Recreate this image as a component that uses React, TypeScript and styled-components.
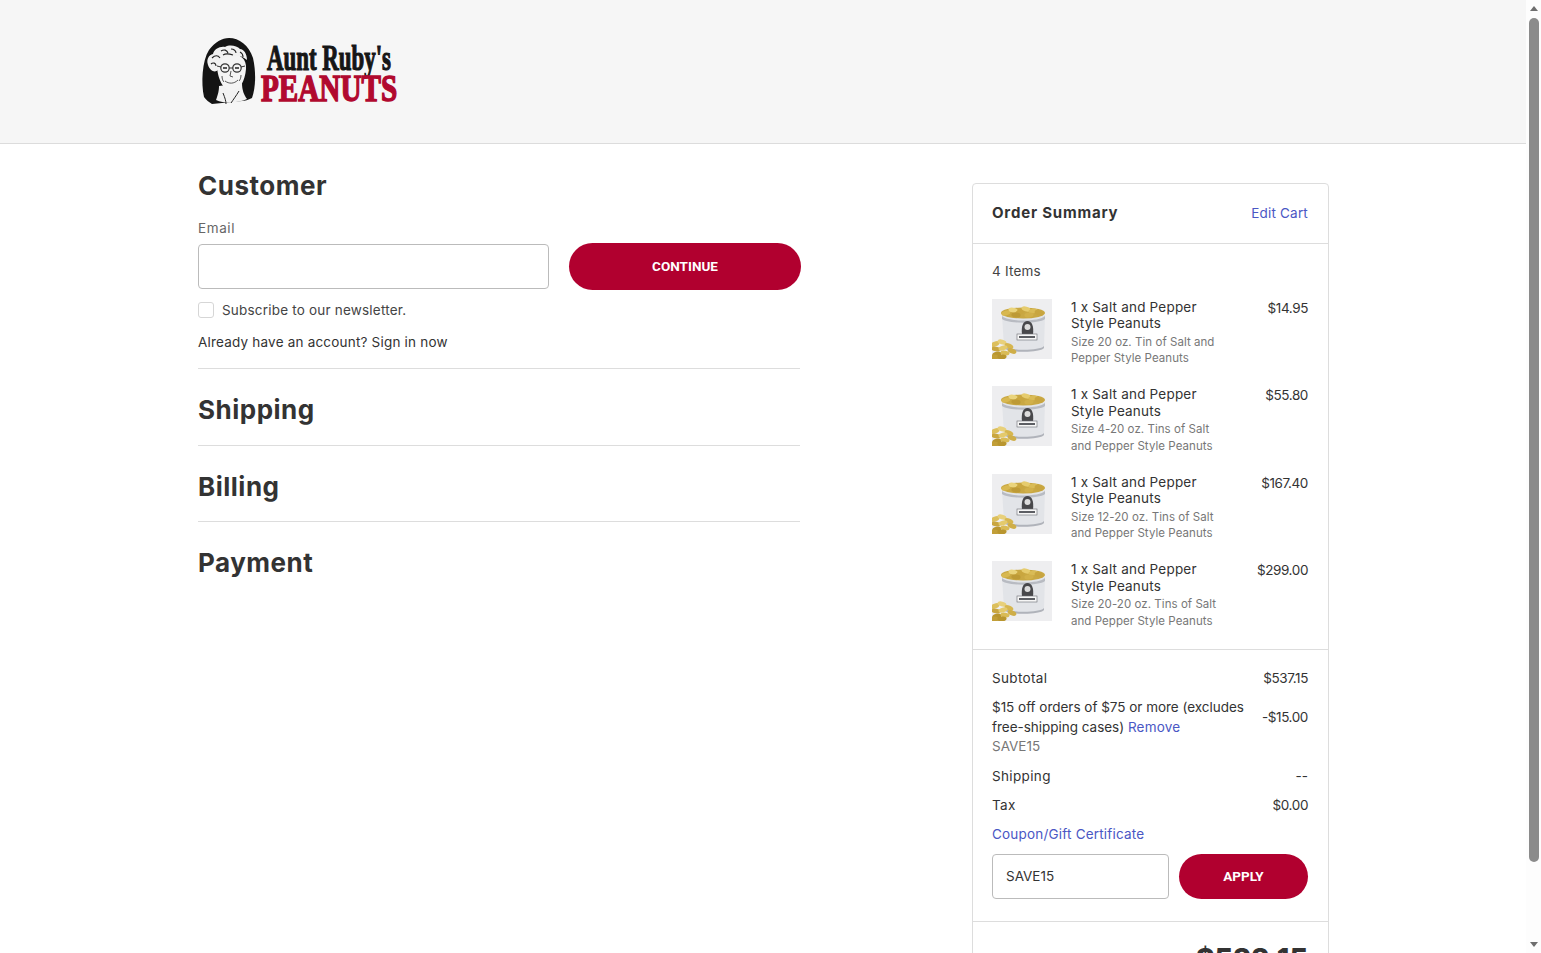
import React from 'react'
import styled, { createGlobalStyle } from 'styled-components'

const FONT = `Inter, "Noto Sans", "Liberation Sans", sans-serif`

const GlobalStyle = createGlobalStyle`
  html, body {
    margin: 0;
    height: 100%;
    overflow: hidden;
    background: #fff;
    font-family: ${FONT};
    color: #333;
  }
`

const Shell = styled.div`
  display: flex;
  width: 1541px;
  height: 953px;
  overflow: hidden;
`
const Page = styled.div`
  width: 1526px;
  height: 953px;
  overflow: hidden;
  flex: none;
`
const Scrollbar = styled.div`
  width: 15px;
  flex: none;
  display: flex;
  flex-direction: column;
  align-items: center;
  background: #fdfdfd;
`
const Arrow = styled.div<{ $down?: boolean }>`
  width: 15px;
  height: 17px;
  flex: none;
  display: flex;
  align-items: center;
  justify-content: center;
  &::after {
    content: '';
    border-left: 4.5px solid transparent;
    border-right: 4.5px solid transparent;
    ${p => (p.$down ? 'border-top: 5px solid #6e6e6e;' : 'border-bottom: 5px solid #6e6e6e;')}
  }
`
const Thumb = styled.div`
  width: 10px;
  height: 844px;
  margin-top: 1px;
  border-radius: 5px;
  background: #8b8b8b;
  flex: none;
`
const Spacer = styled.div`
  flex: 1;
`

const Header = styled.header`
  height: 143px;
  background: #f6f6f6;
  border-bottom: 1px solid #dcdcdc;
  overflow: hidden;
`
const Container = styled.div`
  width: 1131px;
  margin-left: 198px;
`
const LogoWrap = styled(Container)`
  padding-top: 37px;
  svg {
    display: block;
  }
`
const Main = styled(Container)`
  display: flex;
  justify-content: space-between;
  align-items: flex-start;
`
const Left = styled.div`
  width: 602px;
  padding-top: 26px;
`
const Heading = styled.h2`
  margin: 0;
  font-size: 26px;
  line-height: 32px;
  font-weight: 700;
  letter-spacing: 0.5px;
  color: #333;
`
const CustomerForm = styled.div`
  padding-bottom: 17px;
  border-bottom: 1px solid #ddd;
`
const EmailLabel = styled.div`
  margin-top: 17px;
  font-size: 13.5px;
  line-height: 18px;
  letter-spacing: 0.6px;
  color: #666;
`
const EmailRow = styled.div`
  display: flex;
  align-items: center;
  gap: 20px;
  margin-top: 6px;
  width: 604px;
`
const TextInput = styled.div<{ $w: number }>`
  box-sizing: border-box;
  width: ${p => p.$w}px;
  height: 45px;
  padding: 0 13px;
  display: flex;
  align-items: center;
  background: #fff;
  border: 1px solid #bbb;
  border-radius: 4px;
  font-size: 13.5px;
  color: #333;
`
const PillButton = styled.button<{ $w: number; $h: number }>`
  width: ${p => p.$w}px;
  height: ${p => p.$h}px;
  padding: 0 0 1px;
  border: none;
  border-radius: 24px;
  background: #b1002f;
  color: #fff;
  font-family: Roboto, ${FONT};
  font-size: 13.5px;
  font-weight: 700;
  text-transform: uppercase;
  flex: none;
`
const CheckRow = styled.div`
  display: flex;
  align-items: center;
  gap: 8px;
  margin-top: 11px;
  height: 17px;
  font-size: 13.5px;
  letter-spacing: 0.2px;
  color: #444;
`
const Box = styled.div`
  box-sizing: border-box;
  width: 16px;
  height: 16px;
  border: 1px solid #d6d6d6;
  border-radius: 3px;
  background: #fff;
`
const SignIn = styled.div`
  margin-top: 15px;
  font-size: 13.5px;
  line-height: 18px;
  letter-spacing: 0.2px;
  color: #333;
`
const Step = styled.div<{ $last?: boolean }>`
  padding: 25px 0 ${p => (p.$last ? 0 : 18.5)}px;
  ${p => (p.$last ? '' : 'border-bottom: 1px solid #ddd;')}
`

const Card = styled.aside`
  box-sizing: border-box;
  width: 357px;
  margin-top: 39px;
  border: 1px solid #ddd;
  border-radius: 4px;
  background: #fff;
`
const CardHead = styled.div`
  height: 60px;
  padding: 0 20px 2px 19px;
  box-sizing: border-box;
  display: flex;
  align-items: center;
  justify-content: space-between;
  border-bottom: 1px solid #ddd;
`
const CardTitle = styled.div`
  font-size: 15px;
  font-weight: 700;
  letter-spacing: 0.8px;
  color: #333;
`
const BlueLink = styled.a`
  color: #4a57c4;
  font-size: 13.5px;
  letter-spacing: 0.2px;
`
const CouponLink = styled(BlueLink)`
  display: block;
  line-height: 18px;
`
const Section = styled.div`
  padding: 0 20px 0 19px;
  border-bottom: 1px solid #ddd;
`
const ItemsSection = styled(Section)`
  padding-top: 18px;
  padding-bottom: 19.6px;
`
const ItemCount = styled.div`
  font-size: 13.5px;
  line-height: 18px;
  letter-spacing: 0.2px;
  color: #444;
  margin-bottom: 19px;
`
const ItemList = styled.div`
  display: flex;
  flex-direction: column;
  gap: 19.4px;
`
const Item = styled.div`
  display: grid;
  grid-template-columns: 60px 1fr auto;
  column-gap: 19px;
  align-items: start;
`
const TinArt = styled.svg`
  display: block;
  filter: blur(0.45px);
`
const ItemName = styled.div`
  font-size: 13.5px;
  line-height: 16.4px;
  letter-spacing: 0.2px;
  color: #333;
`
const ItemDesc = styled.div`
  margin-top: 2px;
  font-size: 11.5px;
  line-height: 16.6px;
  letter-spacing: 0.05px;
  color: #777;
`
const ItemPrice = styled.div`
  font-size: 13.5px;
  line-height: 18px;
  letter-spacing: -0.4px;
  color: #333;
`
const Totals = styled(Section)`
  padding-top: 19px;
  padding-bottom: 22px;
`
const Row = styled.div`
  display: flex;
  justify-content: space-between;
  align-items: center;
  font-size: 13.5px;
  line-height: 18px;
  color: #333;
  margin-bottom: 11px;
`
const RowLabel = styled.span`
  letter-spacing: 0.35px;
`
const Amount = styled.span`
  letter-spacing: -0.4px;
`
const DiscountText = styled.div`
  line-height: 20px;
  margin-top: -1px;
  letter-spacing: -0.02px;
`
const Code = styled.div`
  font-size: 13.5px;
  line-height: 18px;
  color: #777;
  margin: -11px 0 12px;
`
const CouponRow = styled.div`
  display: flex;
  gap: 10px;
  margin-top: 11px;
`
const GrandTotal = styled.div`
  padding: 19px 20px 0 19px;
  text-align: right;
  font-size: 28.5px;
  line-height: 36px;
  font-weight: 800;
  color: #333;
`

const Logo = () => (
  <svg width="200" height="76" viewBox="0 0 200 76" role="img" aria-label="Aunt Ruby's Peanuts">
    <path d="M6 60 C3 46 4 24 11 13 C17 5 24 1 31 1 C41 1 51 8 55 21 C58 34 58 50 54 61 C50 63 47 64 44 64 L14 67 C11 65 8 63 6 60 Z" fill="#141414" />
    <path d="M18 63 C20 57 21 54 21 49 L44 46 C44 53 46 58 49 62 C41 66 27 67 18 63 Z" fill="#f2f2f2" />
    <path d="M19 30 C18 20 24 17 33 17 C42 17 49 22 48 32 C47 44 42 53 34 54 C26 54 20 43 19 30 Z" fill="#f4f4f4" />
    <path d="M10 28 C8 22 11 18 15 17 C16 12 22 9 27 10 C32 7 39 9 42 12 C46 12 49 17 49 23 C46 21 44 19 40 19 C34 20 28 19 24 22 C22 25 21 28 20 33 C17 36 12 34 10 28 Z" fill="#f1f1f1" />
    <path d="M14 21 C17 18 20 18 22 21 M23 14 C26 12 29 13 30 16 M33 12 C36 12 38 14 38 16 M42 15 C44 16 45 18 45 20 M13 27 C15 25 18 26 18 29 M25 18 C28 16 32 17 35 18" fill="none" stroke="#222" strokeWidth="1.1" />
    <circle cx="27" cy="31" r="4.2" fill="none" stroke="#333" strokeWidth="1.2" />
    <circle cx="39" cy="31" r="4.2" fill="none" stroke="#333" strokeWidth="1.2" />
    <path d="M25 31 H29 M37 31 H41" stroke="#222" strokeWidth="1.3" />
    <path d="M31 31 H35 M23 30 L19 29 M43 30 L47 29" stroke="#333" strokeWidth="1" />
    <path d="M33 34 L32 39 L35 40 M27 44 C31 47 36 47 40 43 M24 39 C24 42 25 44 26 45 M43 38 C43 41 42 43 41 44" fill="none" stroke="#444" strokeWidth="0.9" />
    <path d="M25 56 C27 61 28 64 28 67 M41 54 C38 59 35 63 33 66" fill="none" stroke="#222" strokeWidth="1" />
    <text transform="translate(69 33) scale(0.636 1)" fontFamily="'Liberation Serif', serif" fontWeight="700" fontSize="36" fill="#161616" stroke="#161616" strokeWidth="1.2">
      Aunt Ruby's
    </text>
    <text transform="translate(63 64) scale(0.768 1)" fontFamily="'Liberation Serif', serif" fontWeight="700" fontSize="38" fill="#b1092f" stroke="#b1092f" strokeWidth="1.5">
      PEANUTS
    </text>
  </svg>
)

// peanuts in the tin and in the pile beside it: x, y, rotation, colour
const peanuts: [number, number, number, string][] = [
  [14, 14, -15, '#d8b850'], [21, 11, 10, '#ead47c'], [28, 13, -20, '#c9a63f'], [34, 10, 15, '#e6cc6e'],
  [41, 12, -10, '#d9bb56'], [47, 14, 20, '#c8a540'], [24, 16, 5, '#bd9a36'], [37, 16, -5, '#d1b04a'],
  [3, 45, -20, '#dcbf5c'], [10, 43, 15, '#e8d07a'], [17, 47, 25, '#d6b64f'], [4, 50, 10, '#c9a640'],
  [11, 49, -15, '#e4ca6c'], [20, 52, 20, '#cfae48'], [5, 55, -10, '#b9962f'], [13, 54, 10, '#d9bb56'],
  [2, 58, 5, '#c29f38'], [10, 58, -5, '#b9962f'],
]

const Tin = () => (
  <TinArt width="60" height="60" viewBox="0 0 60 60" aria-hidden="true">
    <rect width="60" height="60" fill="#eeeef0" />
    <path d="M10 16 L12 48 C14 54 50 54 52 48 L53 16 Z" fill="#e2e4e8" />
    <path d="M10 17 C16 23 47 23 53 17 L53 20 C47 25 16 25 10 20 Z" fill="#b8bbc2" />
    <path d="M12 47 C16 52 48 52 52 47 L52 49 C48 54 16 54 12 49 Z" fill="#b0b3ba" />
    <ellipse cx="31" cy="14" rx="22" ry="5.5" fill="#c9a843" />
    <path d="M30 36 C29 27 31 22 35.5 22 C40 22 42 27 41 36 Z" fill="#48484b" />
    <circle cx="35.5" cy="28" r="3" fill="#dcdcdc" />
    <rect x="25" y="35" width="20" height="6" fill="#f6f6f6" stroke="#6a6c72" strokeWidth="0.6" />
    <rect x="27" y="37" width="16" height="2" fill="#5c5e63" />
    {peanuts.map(([x, y, r, c]) => (
      <ellipse key={`${x}-${y}`} cx={x} cy={y} rx="4.6" ry="2.4" fill={c} transform={`rotate(${r} ${x} ${y})`} />
    ))}
  </TinArt>
)

const items = [
  { price: '$14.95', desc: ['Size 20 oz. Tin of Salt and', 'Pepper Style Peanuts'] },
  { price: '$55.80', desc: ['Size 4-20 oz. Tins of Salt', 'and Pepper Style Peanuts'] },
  { price: '$167.40', desc: ['Size 12-20 oz. Tins of Salt', 'and Pepper Style Peanuts'] },
  { price: '$299.00', desc: ['Size 20-20 oz. Tins of Salt', 'and Pepper Style Peanuts'] },
]

export default function App() {
  return (
    <Shell>
      <GlobalStyle />
      <Page>
        <Header>
          <LogoWrap>
            <Logo />
          </LogoWrap>
        </Header>
        <Main>
          <Left>
            <CustomerForm>
              <Heading>Customer</Heading>
              <EmailLabel>Email</EmailLabel>
              <EmailRow>
                <TextInput $w={351} />
                <PillButton $w={232} $h={47}>Continue</PillButton>
              </EmailRow>
              <CheckRow>
                <Box />
                Subscribe to our newsletter.
              </CheckRow>
              <SignIn>Already have an account? Sign in now</SignIn>
            </CustomerForm>
            <Step><Heading>Shipping</Heading></Step>
            <Step><Heading>Billing</Heading></Step>
            <Step $last><Heading>Payment</Heading></Step>
          </Left>
          <Card>
            <CardHead>
              <CardTitle>Order Summary</CardTitle>
              <BlueLink>Edit Cart</BlueLink>
            </CardHead>
            <ItemsSection>
              <ItemCount>4 Items</ItemCount>
              <ItemList>
                {items.map(item => (
                  <Item key={item.price}>
                    <Tin />
                    <div>
                      <ItemName>1 x Salt and Pepper<br />Style Peanuts</ItemName>
                      <ItemDesc>{item.desc[0]}<br />{item.desc[1]}</ItemDesc>
                    </div>
                    <ItemPrice>{item.price}</ItemPrice>
                  </Item>
                ))}
              </ItemList>
            </ItemsSection>
            <Totals>
              <Row><RowLabel>Subtotal</RowLabel><Amount>$537.15</Amount></Row>
              <Row>
                <DiscountText>
                  $15 off orders of $75 or more (excludes<br />
                  free-shipping cases) <BlueLink>Remove</BlueLink>
                </DiscountText>
                <Amount>-$15.00</Amount>
              </Row>
              <Code>SAVE15</Code>
              <Row><RowLabel>Shipping</RowLabel><span>--</span></Row>
              <Row><RowLabel>Tax</RowLabel><Amount>$0.00</Amount></Row>
              <CouponLink>Coupon/Gift Certificate</CouponLink>
              <CouponRow>
                <TextInput $w={177}>SAVE15</TextInput>
                <PillButton $w={129} $h={45}>Apply</PillButton>
              </CouponRow>
            </Totals>
            <GrandTotal>$522.15</GrandTotal>
          </Card>
        </Main>
      </Page>
      <Scrollbar>
        <Arrow />
        <Thumb />
        <Spacer />
        <Arrow $down />
      </Scrollbar>
    </Shell>
  )
}
